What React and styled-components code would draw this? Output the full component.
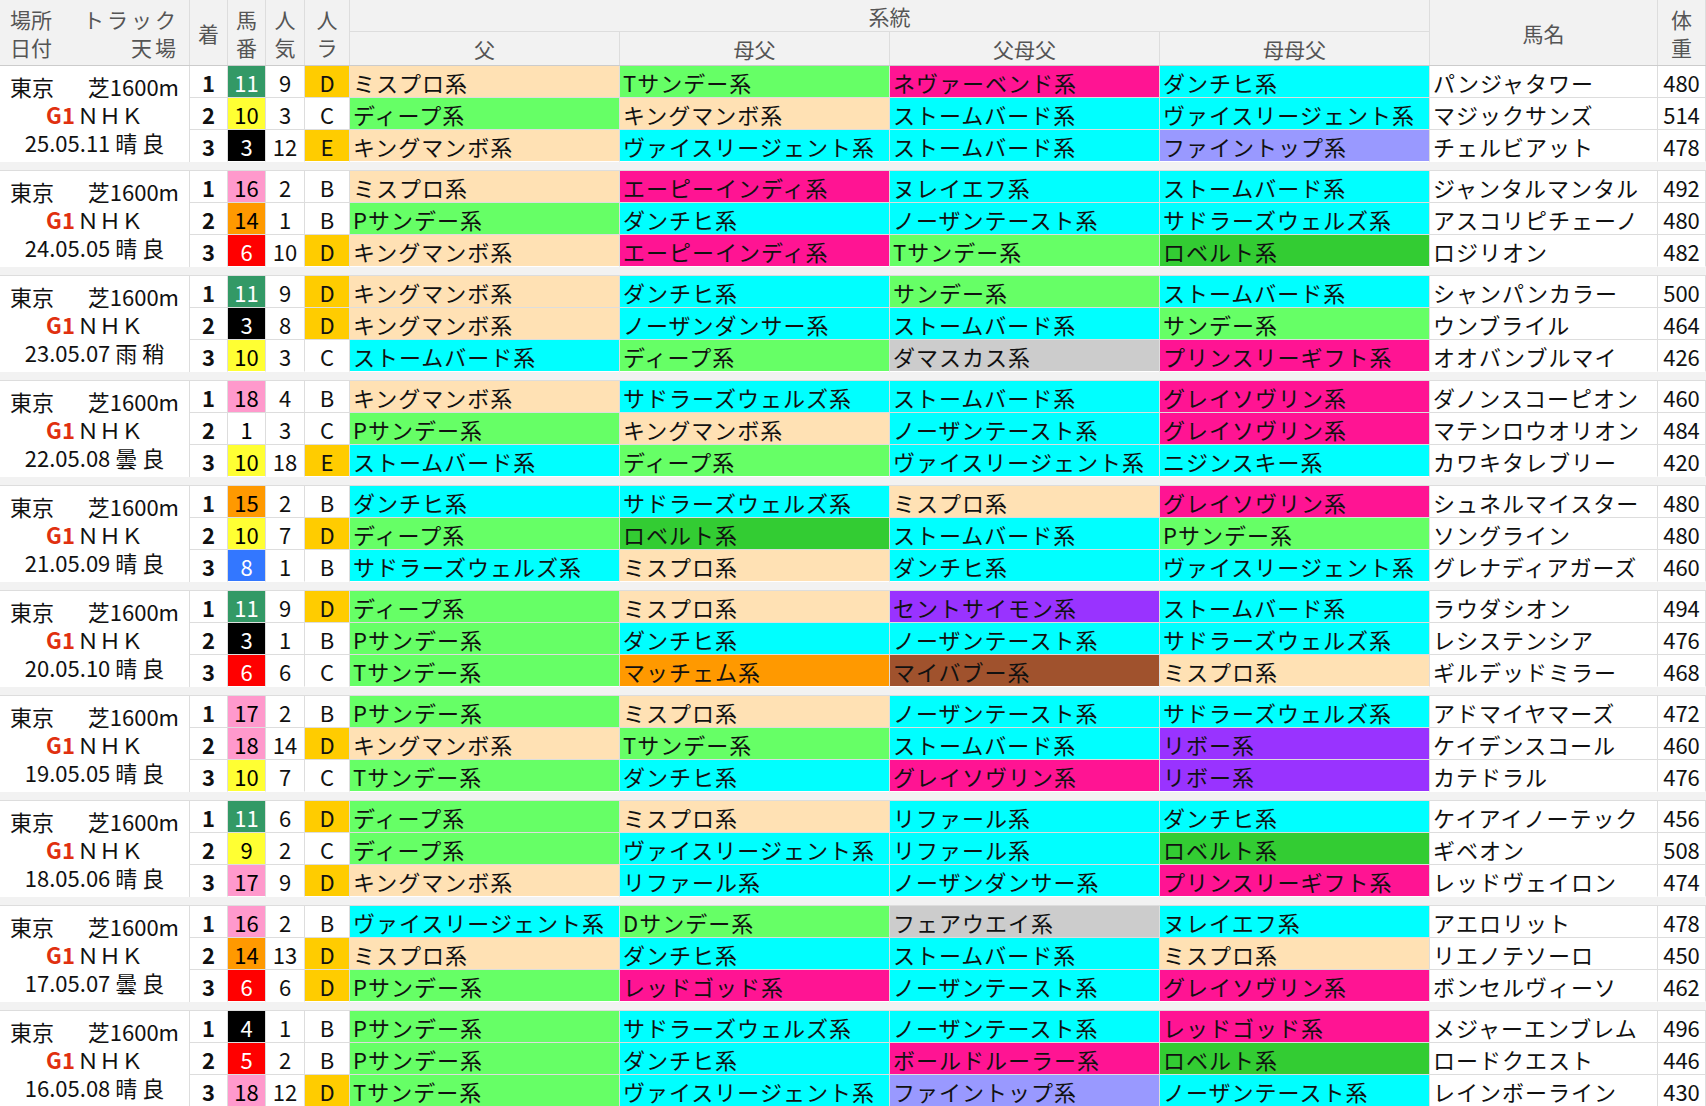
import React from 'react';
import styled, { createGlobalStyle } from 'styled-components';

const GlobalStyle = createGlobalStyle`
  html, body { margin: 0; padding: 0; background: #fff; }
  body { font-family: "Noto Sans CJK JP", "Noto Sans", sans-serif; }
`;

const COLS = '190px 38px 38px 39px 45px 270px 270px 270px 270px 228px 48px';

const lineColors = {
  peach: '#ffe1b4',
  green: '#66ff66',
  cyan: '#00ffff',
  pink: '#ff1493',
  lavender: '#9999ff',
  dkgreen: '#33cc33',
  grey: '#cccccc',
  purple: '#9933ff',
  orange: '#ff9900',
  brown: '#a0522d',
};

const lineMap = {
  ミスプロ系: 'peach', キングマンボ系: 'peach',
  Tサンデー系: 'green', ディープ系: 'green', Pサンデー系: 'green', サンデー系: 'green', Dサンデー系: 'green',
  ストームバード系: 'cyan', ダンチヒ系: 'cyan', ヴァイスリージェント系: 'cyan', ヌレイエフ系: 'cyan',
  ノーザンテースト系: 'cyan', サドラーズウェルズ系: 'cyan', ノーザンダンサー系: 'cyan', リファール系: 'cyan', ニジンスキー系: 'cyan',
  ネヴァーベンド系: 'pink', エーピーインディ系: 'pink', グレイソヴリン系: 'pink', プリンスリーギフト系: 'pink',
  レッドゴッド系: 'pink', ボールドルーラー系: 'pink',
  ファイントップ系: 'lavender', ロベルト系: 'dkgreen', ダマスカス系: 'grey', フェアウエイ系: 'grey',
  セントサイモン系: 'purple', リボー系: 'purple', マッチェム系: 'orange', マイバブー系: 'brown',
};

const frameColors = [
  null,
  ['#ffffff', '#000'],
  ['#000000', '#fff'],
  ['#ff0000', '#fff'],
  ['#3377ff', '#fff'],
  ['#ffff33', '#000'],
  ['#339966', '#fff'],
  ['#ff9900', '#000'],
  ['#ff99cc', '#000'],
];
const frameOf = (n) => (n <= 12 ? Math.ceil(n / 2) : n <= 15 ? 7 : 8);

const races = [
  ['25.05.11 晴 良', [
    [1, 11, 9, 'D', 'ミスプロ系', 'Tサンデー系', 'ネヴァーベンド系', 'ダンチヒ系', 'パンジャタワー', 480],
    [2, 10, 3, 'C', 'ディープ系', 'キングマンボ系', 'ストームバード系', 'ヴァイスリージェント系', 'マジックサンズ', 514],
    [3, 3, 12, 'E', 'キングマンボ系', 'ヴァイスリージェント系', 'ストームバード系', 'ファイントップ系', 'チェルビアット', 478],
  ]],
  ['24.05.05 晴 良', [
    [1, 16, 2, 'B', 'ミスプロ系', 'エーピーインディ系', 'ヌレイエフ系', 'ストームバード系', 'ジャンタルマンタル', 492],
    [2, 14, 1, 'B', 'Pサンデー系', 'ダンチヒ系', 'ノーザンテースト系', 'サドラーズウェルズ系', 'アスコリピチェーノ', 480],
    [3, 6, 10, 'D', 'キングマンボ系', 'エーピーインディ系', 'Tサンデー系', 'ロベルト系', 'ロジリオン', 482],
  ]],
  ['23.05.07 雨 稍', [
    [1, 11, 9, 'D', 'キングマンボ系', 'ダンチヒ系', 'サンデー系', 'ストームバード系', 'シャンパンカラー', 500],
    [2, 3, 8, 'D', 'キングマンボ系', 'ノーザンダンサー系', 'ストームバード系', 'サンデー系', 'ウンブライル', 464],
    [3, 10, 3, 'C', 'ストームバード系', 'ディープ系', 'ダマスカス系', 'プリンスリーギフト系', 'オオバンブルマイ', 426],
  ]],
  ['22.05.08 曇 良', [
    [1, 18, 4, 'B', 'キングマンボ系', 'サドラーズウェルズ系', 'ストームバード系', 'グレイソヴリン系', 'ダノンスコーピオン', 460],
    [2, 1, 3, 'C', 'Pサンデー系', 'キングマンボ系', 'ノーザンテースト系', 'グレイソヴリン系', 'マテンロウオリオン', 484],
    [3, 10, 18, 'E', 'ストームバード系', 'ディープ系', 'ヴァイスリージェント系', 'ニジンスキー系', 'カワキタレブリー', 420],
  ]],
  ['21.05.09 晴 良', [
    [1, 15, 2, 'B', 'ダンチヒ系', 'サドラーズウェルズ系', 'ミスプロ系', 'グレイソヴリン系', 'シュネルマイスター', 480],
    [2, 10, 7, 'D', 'ディープ系', 'ロベルト系', 'ストームバード系', 'Pサンデー系', 'ソングライン', 480],
    [3, 8, 1, 'B', 'サドラーズウェルズ系', 'ミスプロ系', 'ダンチヒ系', 'ヴァイスリージェント系', 'グレナディアガーズ', 460],
  ]],
  ['20.05.10 晴 良', [
    [1, 11, 9, 'D', 'ディープ系', 'ミスプロ系', 'セントサイモン系', 'ストームバード系', 'ラウダシオン', 494],
    [2, 3, 1, 'B', 'Pサンデー系', 'ダンチヒ系', 'ノーザンテースト系', 'サドラーズウェルズ系', 'レシステンシア', 476],
    [3, 6, 6, 'C', 'Tサンデー系', 'マッチェム系', 'マイバブー系', 'ミスプロ系', 'ギルデッドミラー', 468],
  ]],
  ['19.05.05 晴 良', [
    [1, 17, 2, 'B', 'Pサンデー系', 'ミスプロ系', 'ノーザンテースト系', 'サドラーズウェルズ系', 'アドマイヤマーズ', 472],
    [2, 18, 14, 'D', 'キングマンボ系', 'Tサンデー系', 'ストームバード系', 'リボー系', 'ケイデンスコール', 460],
    [3, 10, 7, 'C', 'Tサンデー系', 'ダンチヒ系', 'グレイソヴリン系', 'リボー系', 'カテドラル', 476],
  ]],
  ['18.05.06 晴 良', [
    [1, 11, 6, 'D', 'ディープ系', 'ミスプロ系', 'リファール系', 'ダンチヒ系', 'ケイアイノーテック', 456],
    [2, 9, 2, 'C', 'ディープ系', 'ヴァイスリージェント系', 'リファール系', 'ロベルト系', 'ギベオン', 508],
    [3, 17, 9, 'D', 'キングマンボ系', 'リファール系', 'ノーザンダンサー系', 'プリンスリーギフト系', 'レッドヴェイロン', 474],
  ]],
  ['17.05.07 曇 良', [
    [1, 16, 2, 'B', 'ヴァイスリージェント系', 'Dサンデー系', 'フェアウエイ系', 'ヌレイエフ系', 'アエロリット', 478],
    [2, 14, 13, 'D', 'ミスプロ系', 'ダンチヒ系', 'ストームバード系', 'ミスプロ系', 'リエノテソーロ', 450],
    [3, 6, 6, 'D', 'Pサンデー系', 'レッドゴッド系', 'ノーザンテースト系', 'グレイソヴリン系', 'ボンセルヴィーソ', 462],
  ]],
  ['16.05.08 晴 良', [
    [1, 4, 1, 'B', 'Pサンデー系', 'サドラーズウェルズ系', 'ノーザンテースト系', 'レッドゴッド系', 'メジャーエンブレム', 496],
    [2, 5, 2, 'B', 'Pサンデー系', 'ダンチヒ系', 'ボールドルーラー系', 'ロベルト系', 'ロードクエスト', 446],
    [3, 18, 12, 'D', 'Tサンデー系', 'ヴァイスリージェント系', 'ファイントップ系', 'ノーザンテースト系', 'レインボーライン', 430],
  ]],
];

const Table = styled.div`
  width: 1706px;
  height: 1106px;
  overflow: hidden;
  color: #111;
  font-size: 22px;
`;

const Header = styled.div`
  display: grid;
  grid-template-columns: ${COLS};
  grid-template-rows: 32px 33px;
  background: #f2f2f2;
  color: #555;
  border-bottom: 1px solid #ccc;
`;

const HCell = styled.div`
  grid-column: ${(p) => p.$col};
  grid-row: ${(p) => p.$row};
  border-right: 1px solid #ddd;
  border-bottom: ${(p) => (p.$under ? '1px solid #ddd' : 'none')};
  display: flex;
  align-items: center;
  justify-content: center;
  text-align: center;
  line-height: 28px;
  font-size: 21px;
`;

const Corner = styled.div`
  grid-column: 1;
  grid-row: 1 / 3;
  border-right: 1px solid #ddd;
  display: grid;
  grid-template-columns: auto auto;
  justify-content: space-between;
  align-content: center;
  padding: 0 10px;
  line-height: 28px;
  font-size: 21px;
  & > span:nth-child(2n) { text-align: right; letter-spacing: 3px; }
`;

const Gap = styled.div`
  height: 8px;
  background: #f2f2f2;
  border-bottom: 1px solid #ddd;
`;

const Group = styled.div`
  display: grid;
  grid-template-columns: ${COLS};
  grid-template-rows: repeat(3, 32px);
`;

const RaceCell = styled.div`
  grid-column: 1;
  grid-row: 1 / 4;
  border-right: 1px solid #ddd;
  display: flex;
  flex-direction: column;
  justify-content: center;
  align-items: center;
  line-height: 28px;
  font-size: 22px;
`;

const RaceTop = styled.div`
  width: 100%;
  padding: 0 10px;
  box-sizing: border-box;
  display: flex;
  justify-content: space-between;
`;

const Grade = styled.span`
  color: #e03010;
  font-weight: 700;
  margin-right: 2px;
`;

const Cell = styled.div`
  border-right: 1px solid #ddd;
  border-bottom: 1px solid ${(p) => (p.$last ? '#fff' : '#ddd')};
  background: ${(p) => p.$bg || '#fff'};
  color: ${(p) => p.$fg || '#111'};
  font-weight: ${(p) => (p.$bold ? 700 : 400)};
  display: flex;
  align-items: center;
  justify-content: ${(p) => (p.$left ? 'flex-start' : 'center')};
  padding-left: ${(p) => (p.$left ? '3px' : '0')};
  white-space: nowrap;
  overflow: hidden;
  letter-spacing: ${(p) => (p.$left ? '1px' : '0')};
`;

const Line = ({ name, last }) => (
  <Cell $left $last={last} $bg={lineColors[lineMap[name]]}>{name}</Cell>
);

const Race = ({ date, rows }) => (
  <Group>
    <RaceCell>
      <RaceTop><span>東京</span><span>芝1600m</span></RaceTop>
      <div><Grade>G1</Grade>ＮＨＫ</div>
      <div>{date}</div>
    </RaceCell>
    {rows.map((r, i) => {
      const last = i === 2;
      const [bg, fg] = frameColors[frameOf(r[1])];
      return (
        <React.Fragment key={i}>
          <Cell $bold $last={last}>{r[0]}</Cell>
          <Cell $last={last} $bg={bg} $fg={fg}>{r[1]}</Cell>
          <Cell $last={last}>{r[2]}</Cell>
          <Cell $last={last} $bg={r[3] === 'D' || r[3] === 'E' ? '#ffcc00' : '#fff'}>{r[3]}</Cell>
          <Line name={r[4]} last={last} />
          <Line name={r[5]} last={last} />
          <Line name={r[6]} last={last} />
          <Line name={r[7]} last={last} />
          <Cell $left $last={last}>{r[8]}</Cell>
          <Cell $last={last}>{r[9]}</Cell>
        </React.Fragment>
      );
    })}
  </Group>
);

export default function App() {
  return (
    <Table>
      <GlobalStyle />
      <Header>
        <Corner><span>場所</span><span>トラック</span><span>日付</span><span>天場</span></Corner>
        <HCell $col={2} $row="1 / 3">着</HCell>
        <HCell $col={3} $row="1 / 3">馬<br />番</HCell>
        <HCell $col={4} $row="1 / 3">人<br />気</HCell>
        <HCell $col={5} $row="1 / 3">人<br />ラ</HCell>
        <HCell $col="6 / 10" $row={1} $under>系統</HCell>
        <HCell $col={6} $row={2}>父</HCell>
        <HCell $col={7} $row={2}>母父</HCell>
        <HCell $col={8} $row={2}>父母父</HCell>
        <HCell $col={9} $row={2}>母母父</HCell>
        <HCell $col={10} $row="1 / 3">馬名</HCell>
        <HCell $col={11} $row="1 / 3">体<br />重</HCell>
      </Header>
      {races.map(([date, rows], i) => (
        <React.Fragment key={date}>
          {i > 0 && <Gap />}
          <Race date={date} rows={rows} />
        </React.Fragment>
      ))}
    </Table>
  );
}
